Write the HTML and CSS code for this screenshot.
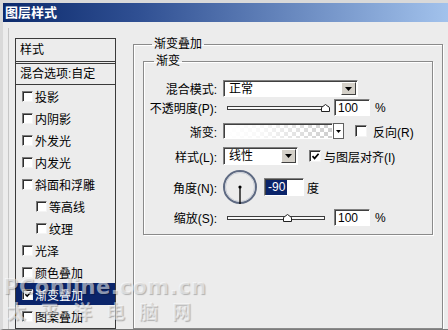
FILE: index.html
```html
<!DOCTYPE html>
<html lang="zh-CN">
<head>
<meta charset="utf-8">
<title>图层样式</title>
<link rel="stylesheet" href="styles.css">
</head>
<body>
<div class="window">
  <div class="titlebar">图层样式</div>
  <div class="content">
    <div class="frame">
      <div class="styles-panel">
        <div class="panel-head">样式</div>
        <div class="panel-mix">混合选项:自定</div>
        <ul class="style-list">
          <li class="item"><span class="cb"></span>投影</li>
          <li class="item"><span class="cb"></span>内阴影</li>
          <li class="item"><span class="cb"></span>外发光</li>
          <li class="item"><span class="cb"></span>内发光</li>
          <li class="item"><span class="cb"></span>斜面和浮雕</li>
          <li class="item sub"><span class="cb"></span>等高线</li>
          <li class="item sub"><span class="cb"></span>纹理</li>
          <li class="item"><span class="cb"></span>光泽</li>
          <li class="item"><span class="cb"></span>颜色叠加</li>
          <li class="item selected"><span class="cb"><svg class="tick" viewBox="0 0 9 9" width="9" height="9"><path d="M1.5 4.2 L3.6 6.4 L7.6 1.8" fill="none" stroke="#000" stroke-width="1.7"/></svg></span>渐变叠加</li>
          <li class="item"><span class="cb"></span>图案叠加</li>
        </ul>
      </div>
      <fieldset class="group outer">
        <legend class="legend-outer">渐变叠加</legend>
        <fieldset class="group inner">
          <legend class="legend-inner">渐变</legend>
          <div class="row r1">
            <span class="lbl">混合模式:</span>
            <div class="select sel-blend"><span class="sel-text">正常</span><span class="drop-btn"><svg viewBox="0 0 7 4" width="7" height="4"><path d="M0 0 H7 L3.5 4 Z" fill="#000"/></svg></span></div>
          </div>
          <div class="row r2">
            <span class="lbl">不透明度(P):</span>
            <div class="slider slider-long"><div class="track"></div><svg class="thumb" style="left:98px" viewBox="0 0 9 8" width="9" height="8"><path d="M0.5 7.5 V3.5 L4.5 0.5 L8.5 3.5 V7.5 Z" fill="#fff" stroke="#222"/></svg></div>
            <div class="num num-pct">100</div>
            <span class="unit">%</span>
          </div>
          <div class="row r3">
            <span class="lbl">渐变:</span>
            <div class="grad"></div>
            <span class="grad-btn"><svg viewBox="0 0 5 3" width="5" height="3"><path d="M0 0 H5 L2.5 3 Z" fill="#000"/></svg></span>
            <span class="cb cb-right cb-reverse"></span>
            <span class="cb-label">反向(R)</span>
          </div>
          <div class="row r4">
            <span class="lbl">样式(L):</span>
            <div class="select sel-style"><span class="sel-text">线性</span><span class="drop-btn"><svg viewBox="0 0 7 4" width="7" height="4"><path d="M0 0 H7 L3.5 4 Z" fill="#000"/></svg></span></div>
            <span class="cb cb-right cb-align"><svg class="tick" viewBox="0 0 9 9" width="9" height="9"><path d="M1.5 4.2 L3.6 6.4 L7.6 1.8" fill="none" stroke="#000" stroke-width="1.7"/></svg></span>
            <span class="cb-label cb-label-tight">与图层对齐(I)</span>
          </div>
          <div class="row r5">
            <span class="lbl">角度(N):</span>
            <svg class="dial" viewBox="0 0 36 36" width="36" height="36">
              <circle cx="18" cy="18" r="16" fill="#ececec" stroke="#5e6a82" stroke-width="2"/>
              <circle cx="18" cy="18" r="14.5" fill="none" stroke="#c9cdd6" stroke-width="1"/>
              <line x1="18" y1="18" x2="18" y2="35" stroke="#000" stroke-width="1.3"/>
              <circle cx="18" cy="18" r="1.6" fill="#000"/>
            </svg>
            <div class="num num-angle"><span class="hl">-90</span></div>
            <span class="unit unit-deg">度</span>
          </div>
          <div class="row r6">
            <span class="lbl">缩放(S):</span>
            <div class="slider slider-short"><div class="track"></div><svg class="thumb" style="left:60px" viewBox="0 0 9 8" width="9" height="8"><path d="M0.5 7.5 V3.5 L4.5 0.5 L8.5 3.5 V7.5 Z" fill="#fff" stroke="#222"/></svg></div>
            <div class="num num-pct num-scale">100</div>
            <span class="unit">%</span>
          </div>
        </fieldset>
      </fieldset>
    </div>
  </div>
  <div class="watermark">
    <div class="wm-line1">PConline.com.cn</div>
    <div class="wm-line2">太平洋电脑网</div>
  </div>
</div>
</body>
</html>
```

FILE: styles.css
```css
* { box-sizing: border-box; }

body {
  margin: 0;
  font-family: "Liberation Sans", "Noto Sans CJK SC", sans-serif;
  font-size: 12px;
  color: #000;
  background: #ececec;
}

.window {
  position: relative;
  width: 448px;
  height: 330px;
  background: #ececec;
  border-left: 3px solid #d9d9d9;
  border-top: 3px solid #d9d9d9;
  border-bottom: 1px solid #7c7c7c;
  display: flex;
  flex-direction: column;
  overflow: hidden;
}

.titlebar {
  flex: none;
  height: 19px;
  line-height: 19px;
  padding-left: 2px;
  color: #fff;
  font-weight: bold;
  font-size: 13px;
  background: linear-gradient(90deg, #0c2a6c 0%, #2f4f92 30%, #5878b2 55%, #a2c2ec 100%);
}

.content {
  flex: 1;
  min-height: 0;
  display: flex;
  padding: 6px 0 0 5px;
}

.frame {
  flex: 1;
  min-height: 0;
  display: flex;
  gap: 17px;
  border-left: 1px solid #c6c6c6;
  padding: 10px 5px 0 6px;
}

/* left style list */
.styles-panel {
  flex: none;
  width: 101px;
  border: 1px solid #3a3a3a;
  display: flex;
  flex-direction: column;
}

.panel-head {
  box-sizing: content-box;
  height: 22px;
  line-height: 22px;
  padding-left: 4px;
  border-bottom: 3px double #3a3a3a;
}

.panel-mix {
  box-sizing: content-box;
  height: 20px;
  line-height: 20px;
  padding-left: 4px;
  border-bottom: 1px solid #3a3a3a;
}

.style-list {
  list-style: none;
  margin: 0;
  padding: 0;
}

.item {
  height: 22px;
  display: flex;
  align-items: center;
  gap: 2px;
  padding-left: 6px;
  white-space: nowrap;
}

.item.sub { padding-left: 20px; }

.item.selected {
  background: #0a246a;
  color: #fff;
}

.cb {
  flex: none;
  width: 11px;
  height: 11px;
  border: 1px solid;
  border-color: #7a7a7a #f4f4f4 #f4f4f4 #7a7a7a;
  box-shadow: inset 1px 1px 0 #2e2e2e;
  background: #fff;
  display: flex;
  align-items: center;
  justify-content: center;
}

.tick { display: block; margin: 1px 0 0 1px; }

/* group boxes */
.group {
  margin: 0;
  min-width: 0;
  border: 1px solid #8a8a8a;
  box-shadow: 1px 1px 0 #fff, inset 1px 1px 0 #fff;
}

.outer {
  flex: 1;
  margin-top: -2px;
  padding: 1px 9px 0 9px;
}

.inner {
  padding: 11px 0 8px 0;
}

legend {
  font-size: 12px;
  line-height: 16px;
  padding: 0 2px;
}

.legend-outer { margin-left: 9px; }
.legend-inner { margin-left: 10px; }

/* rows */
.row {
  display: flex;
  align-items: center;
  white-space: nowrap;
}

.lbl {
  flex: none;
  width: 73px;
  margin-right: 6px;
  text-align: right;
}

.r1 { height: 17px; }
.r2 { height: 17px; margin-top: 2px; }
.r3 { height: 16px; margin-top: 7px; }
.r4 { height: 18px; margin-top: 8px; }
.r5 { height: 34px; margin-top: 5px; }
.r6 { height: 17px; margin-top: 5px; }

.select {
  display: flex;
  height: 17px;
  border: 1px solid;
  border-color: #808080 #fff #fff #808080;
  box-shadow: inset 1px 1px 0 #404040;
  background: #fff;
}

.sel-blend { width: 135px; }
.sel-style { width: 75px; height: 18px; }

.sel-text {
  flex: 1;
  padding: 1px 0 0 5px;
  line-height: 14px;
}

.drop-btn {
  flex: none;
  width: 15px;
  margin: 1px 1px 1px 0;
  background: #d4d0c8;
  border: 1px solid;
  border-color: #fff #404040 #404040 #fff;
  display: flex;
  align-items: center;
  justify-content: center;
}

.drop-btn svg { display: block; }

.slider {
  position: relative;
  height: 17px;
  display: flex;
  align-items: center;
}

.slider-long { width: 108px; }
.slider-short { width: 104px; }

.track {
  flex: 1;
  height: 4px;
  margin: 1px 2px 0 4px;
  border: 1px solid #3c3c3c;
  background: #f8f8f8;
}

.thumb {
  position: absolute;
  top: 5px;
  display: block;
}

.num {
  flex: none;
  width: 36px;
  height: 17px;
  margin-left: 3px;
  padding: 2px 0 0 3px;
  line-height: 13px;
  border: 1px solid;
  border-color: #808080 #fff #fff #808080;
  box-shadow: inset 1px 1px 0 #404040;
  background: #fff;
}

.num-scale { margin-left: 7px; }

.num-angle {
  width: 40px;
  height: 18px;
  margin-left: 6px;
  padding: 1px 0 0 1px;
}

.hl {
  display: inline-block;
  height: 15px;
  line-height: 15px;
  padding: 0 2px;
  background: #0a246a;
  color: #fff;
}

.unit { margin-left: 5px; }
.unit-deg { margin-left: 3px; }

.dial { display: block; flex: none; margin-left: -1px; }

.grad {
  flex: none;
  width: 110px;
  height: 16px;
  border: 1px solid;
  border-color: #808080 #fff #fff #808080;
  box-shadow: inset 1px 1px 0 #404040;
  background:
    linear-gradient(90deg, #fff 0%, rgba(255,255,255,0.85) 35%, rgba(255,255,255,0) 100%),
    repeating-conic-gradient(#cdcdcd 0 25%, #fff 0 50%) 0 0 / 8px 8px;
}

.grad-btn {
  flex: none;
  width: 11px;
  height: 16px;
  border: 1px solid #606060;
  background: #fff;
  display: flex;
  align-items: center;
  justify-content: center;
}

.grad-btn svg { display: block; }

.cb-right { width: 12px; height: 12px; }
.cb-reverse { margin-left: 11px; }
.cb-align { margin-left: 11px; }

.cb-label { margin-left: 6px; }
.cb-label-tight { margin-left: 3px; }

/* watermark overlay */
.watermark {
  position: absolute;
  left: 0;
  top: 273px;
  color: rgba(255, 255, 255, 0.55);
  text-shadow: 1px 1px 1px rgba(0, 0, 0, 0.25);
  pointer-events: none;
}

.wm-line1 {
  font-family: "DejaVu Sans", sans-serif;
  font-weight: bold;
  font-size: 21px;
  line-height: 23px;
  letter-spacing: 0.5px;
}

.wm-line2 {
  font-family: "Noto Sans CJK SC", sans-serif;
  font-weight: bold;
  font-size: 19px;
  line-height: 24px;
  letter-spacing: 14px;
  padding-left: 4px;
}
```
